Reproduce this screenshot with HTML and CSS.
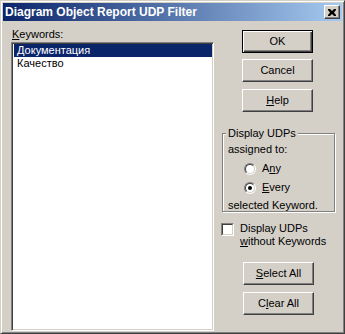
FILE: index.html
```html
<!DOCTYPE html>
<html lang="ru">
<head>
  <meta charset="UTF-8">
  <title>Diagram Object Report UDP Filter</title>
  <link rel="stylesheet" href="styles.css">
</head>
<body>
  <div class="window">
    <div class="titlebar">
      <span class="title">Diagram Object Report UDP Filter</span>
      <span class="close-btn">
        <svg width="8" height="7" viewBox="0 0 8 7">
          <path d="M0 0h2l2 2 2-2h2v1l-2 2.5 2 2.5v1h-2l-2-2-2 2h-2v-1l2-2.5-2-2.5z" fill="#000"/>
        </svg>
      </span>
    </div>

    <div class="content">
      <div class="left-col">
        <div class="label"><u>K</u>eywords:</div>
        <div class="listbox">
          <div class="item selected">Документация</div>
          <div class="item">Качество</div>
        </div>
      </div>

      <div class="right-col">
        <div class="btn default">OK</div>
        <div class="btn btn-cancel">Cancel</div>
        <div class="btn btn-help"><u>H</u>elp</div>

        <div class="groupbox">
          <span class="legend">Display UDPs</span>
          <div class="group-text">assigned to:</div>
          <div class="radio-row">
            <span class="radio"><span class="radio-inner"></span></span>
            <span>A<u>n</u>y</span>
          </div>
          <div class="radio-row">
            <span class="radio"><span class="radio-inner"><span class="dot"></span></span></span>
            <span><u>E</u>very</span>
          </div>
          <div class="group-text last">selected Keyword.</div>
        </div>

        <div class="check-row">
          <span class="checkbox"><span class="checkbox-inner"></span></span>
          <span class="check-label">Display UDPs<br><u>w</u>ithout Keywords</span>
        </div>

        <div class="btn btn-select"><u>S</u>elect All</div>
        <div class="btn btn-clear">C<u>l</u>ear All</div>
      </div>
    </div>
  </div>
</body>
</html>
```

FILE: styles.css
```css
body {
  margin: 0;
  width: 345px;
  height: 334px;
  overflow: hidden;
  font-family: "Liberation Sans", Arial, sans-serif;
  font-size: 11px;
  line-height: 13px;
  color: #000;
  background-color: #d4d0c8;
}

.window {
  box-sizing: border-box;
  width: 345px;
  height: 334px;
  padding: 2px;
  background-color: #d4d0c8;
  border: 1px solid;
  border-color: #d4d0c8 #404040 #404040 #d4d0c8;
  box-shadow: inset 1px 1px 0 #fff, inset -1px -1px 0 #808080;
  overflow: hidden;
}

.titlebar {
  height: 18px;
  display: flex;
  align-items: center;
  justify-content: space-between;
  padding: 0 2px 0 2px;
  background: linear-gradient(to right, #0a246a, #a6caf0);
}

.title {
  color: #fff;
  font-weight: bold;
  font-size: 12px;
  padding-top: 1px;
}

.close-btn {
  box-sizing: border-box;
  width: 16px;
  height: 14px;
  display: flex;
  align-items: center;
  justify-content: center;
  background-color: #d4d0c8;
  border: 1px solid;
  border-color: #fff #404040 #404040 #fff;
  box-shadow: inset -1px -1px 0 #808080;
}

.content {
  display: flex;
  align-items: flex-start;
  padding-left: 8px;
}

.left-col {
  margin-top: 7px;
}

.label {
  height: 13px;
  margin-bottom: 1px;
  padding-left: 1px;
}

.listbox {
  box-sizing: border-box;
  width: 203px;
  height: 289px;
  padding: 1px;
  background-color: #fff;
  border: 1px solid;
  border-color: #808080 #fff #fff #808080;
  box-shadow: inset 1px 1px 0 #404040, inset -1px -1px 0 #d4d0c8;
}

.item {
  height: 13px;
  padding-left: 3px;
  margin-left: 1px;
}

.item.selected {
  background-color: #0a246a;
  color: #fff;
}

.right-col {
  margin-left: 7px;
  padding-top: 9px;
  width: 115px;
}

.btn {
  box-sizing: border-box;
  width: 71px;
  height: 23px;
  margin-left: 21px;
  display: flex;
  align-items: center;
  justify-content: center;
  background-color: #d4d0c8;
  border: 1px solid;
  border-color: #fff #404040 #404040 #fff;
  box-shadow: inset -1px -1px 0 #808080;
}

.btn.default {
  border-color: #000;
  box-shadow: inset 1px 1px 0 #fff, inset -1px -1px 0 #404040, inset -2px -2px 0 #808080;
}

.btn-cancel {
  margin-top: 6px;
}

.btn-help {
  margin-top: 7px;
}

.groupbox {
  position: relative;
  box-sizing: border-box;
  width: 113px;
  height: 79px;
  margin-top: 21px;
  margin-left: 1px;
  padding: 9px 0 0 5px;
  border: 1px solid #808080;
  box-shadow: inset 1px 1px 0 #fff, 1px 1px 0 #fff;
}

.legend {
  position: absolute;
  top: -7px;
  left: 3px;
  padding: 0 2px 0 2px;
  background-color: #d4d0c8;
}

.group-text {
  height: 13px;
}

.group-text.last {
  margin-top: 5px;
}

.radio-row {
  display: flex;
  align-items: center;
  height: 13px;
  margin-top: 6px;
  padding-left: 16px;
}

.radio {
  box-sizing: border-box;
  width: 12px;
  height: 12px;
  margin-right: 6px;
  border-radius: 50%;
  border: 1px solid;
  border-color: #808080 #fff #fff #808080;
}

.radio-inner {
  box-sizing: border-box;
  display: flex;
  align-items: center;
  justify-content: center;
  width: 10px;
  height: 10px;
  border-radius: 50%;
  background-color: #fff;
  border: 1px solid;
  border-color: #404040 #d4d0c8 #d4d0c8 #404040;
}

.dot {
  width: 4px;
  height: 4px;
  border-radius: 50%;
  background-color: #000;
}

.check-row {
  display: flex;
  align-items: flex-start;
  margin-top: 11px;
}

.checkbox {
  box-sizing: border-box;
  width: 13px;
  height: 13px;
  margin-right: 6px;
  border: 1px solid;
  border-color: #808080 #fff #fff #808080;
}

.checkbox-inner {
  display: block;
  box-sizing: border-box;
  width: 11px;
  height: 11px;
  background-color: #fff;
  border: 1px solid;
  border-color: #404040 #d4d0c8 #d4d0c8 #404040;
}

.check-label {
  margin-top: -1px;
}

.btn-select {
  margin-top: 14px;
  margin-left: 22px;
}

.btn-clear {
  margin-top: 7px;
  margin-left: 22px;
}
```
